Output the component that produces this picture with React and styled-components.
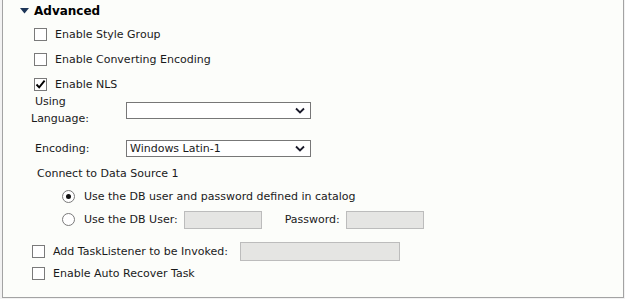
import styled, { createGlobalStyle } from "styled-components";

const GlobalStyle = createGlobalStyle`
  body {
    margin: 0;
    background: #f2f2f2;
    font-family: "DejaVu Sans", Verdana, sans-serif;
    font-size: 11px;
    color: #1a1a1a;
  }
`;

const Panel = styled.div`
  margin-left: 2px;
  width: 622px;
  height: 298px;
  box-sizing: border-box;
  border: 1px solid #a3a3a3;
  border-top: none;
  background: #fcfdfa;
`;

const Header = styled.div`
  height: 22px;
  display: flex;
  align-items: center;
  padding-left: 17px;
  gap: 5px;
  font-weight: bold;
  font-size: 12px;
  color: #000;
`;

const CheckRow = styled.label`
  height: ${(p) => p.$h || 25}px;
  display: flex;
  align-items: center;
  padding-left: ${(p) => p.$indent}px;
  gap: 8px;
`;

const Box = styled.span`
  width: 13px;
  height: 13px;
  box-sizing: border-box;
  border: 1px solid #7a7a7a;
  background: #fff;
  display: inline-flex;
  align-items: center;
  justify-content: center;
  flex: none;
`;

const Radio = styled.span`
  width: 13px;
  height: 13px;
  box-sizing: border-box;
  border-radius: 50%;
  border: 1px solid #7a7a7a;
  background: #fff;
  display: inline-flex;
  align-items: center;
  justify-content: center;
  flex: none;
  &::after {
    content: "";
    width: 5px;
    height: 5px;
    border-radius: 50%;
    background: ${(p) => (p.$on ? "#111" : "transparent")};
  }
`;

const FormGrid = styled.div`
  margin-top: -4px;
  display: grid;
  grid-template-columns: 91px 185px;
  grid-template-rows: 34px 26px;
  row-gap: 8px;
  align-items: center;
  padding-left: 32px;
`;

const FieldLabel = styled.div`
  line-height: 17px;
  & > span {
    display: block;
  }
`;

const WrapLine = styled.span`
  margin-left: -4px;
`;

const Select = styled.div`
  height: 17px;
  box-sizing: border-box;
  border: 1px solid #777;
  background: #fff;
  display: flex;
  align-items: center;
  justify-content: space-between;
  padding: 0 5px 0 3px;
`;

const Caption = styled.div`
  height: 24px;
  display: flex;
  align-items: center;
  padding-left: 34px;
`;

const RadioRow = styled.label`
  height: 23px;
  display: flex;
  align-items: center;
  padding-left: 59px;
`;

const RadioText = styled.span`
  margin-left: 9px;
`;

const TextBox = styled.span`
  display: inline-block;
  width: ${(p) => p.$w}px;
  height: ${(p) => p.$h || 18}px;
  box-sizing: border-box;
  border: 1px solid #bcbcbc;
  background: #e5e5e3;
  margin-left: ${(p) => p.$ml || 0}px;
`;

const Inline = styled.span`
  margin-left: ${(p) => p.$ml || 0}px;
`;

const BottomGroup = styled.div`
  margin-top: 9px;
`;

const Chevron = () => (
  <svg width="10" height="7" viewBox="0 0 10 7">
    <path d="M1 1.5 L5 5.5 L9 1.5" fill="none" stroke="#1a1a2a" strokeWidth="1.8" />
  </svg>
);

const Check = () => (
  <svg width="11" height="11" viewBox="0 0 11 11">
    <path d="M1.5 5.5 L4.2 8.4 L9.6 1.6" fill="none" stroke="#000" strokeWidth="1.9" />
  </svg>
);

const Triangle = () => (
  <svg width="9" height="6" viewBox="0 0 9 6">
    <path d="M0 0 H9 L4.5 5.5 Z" fill="#1d3557" />
  </svg>
);

function CheckOption({ label, checked, indent = 31, h }) {
  return (
    <CheckRow $indent={indent} $h={h}>
      <Box>{checked && <Check />}</Box>
      <span>{label}</span>
    </CheckRow>
  );
}

export default function App() {
  return (
    <>
      <GlobalStyle />
      <Panel>
        <Header>
          <Triangle />
          <span>Advanced</span>
        </Header>
        <CheckOption label="Enable Style Group" />
        <CheckOption label="Enable Converting Encoding" />
        <CheckOption label="Enable NLS" checked />

        <FormGrid>
          <FieldLabel>
            <span>Using</span>
            <WrapLine>Language:</WrapLine>
          </FieldLabel>
          <Select>
            <span />
            <Chevron />
          </Select>
          <FieldLabel>
            <span>Encoding:</span>
          </FieldLabel>
          <Select>
            <span>Windows Latin-1</span>
            <Chevron />
          </Select>
        </FormGrid>

        <Caption>Connect to Data Source 1</Caption>
        <RadioRow>
          <Radio $on />
          <RadioText>Use the DB user and password defined in catalog</RadioText>
        </RadioRow>
        <RadioRow>
          <Radio />
          <RadioText>Use the DB User:</RadioText>
          <TextBox $w={78} $ml={6} />
          <Inline $ml={23}>Password:</Inline>
          <TextBox $w={78} $ml={6} />
        </RadioRow>

        <BottomGroup>
          <CheckRow $indent={29} $h={22}>
            <Box />
            <span>Add TaskListener to be Invoked:</span>
            <TextBox $w={160} $h={19} $ml={4} />
          </CheckRow>
          <CheckOption label="Enable Auto Recover Task" indent={29} h={22} />
        </BottomGroup>
      </Panel>
    </>
  );
}
